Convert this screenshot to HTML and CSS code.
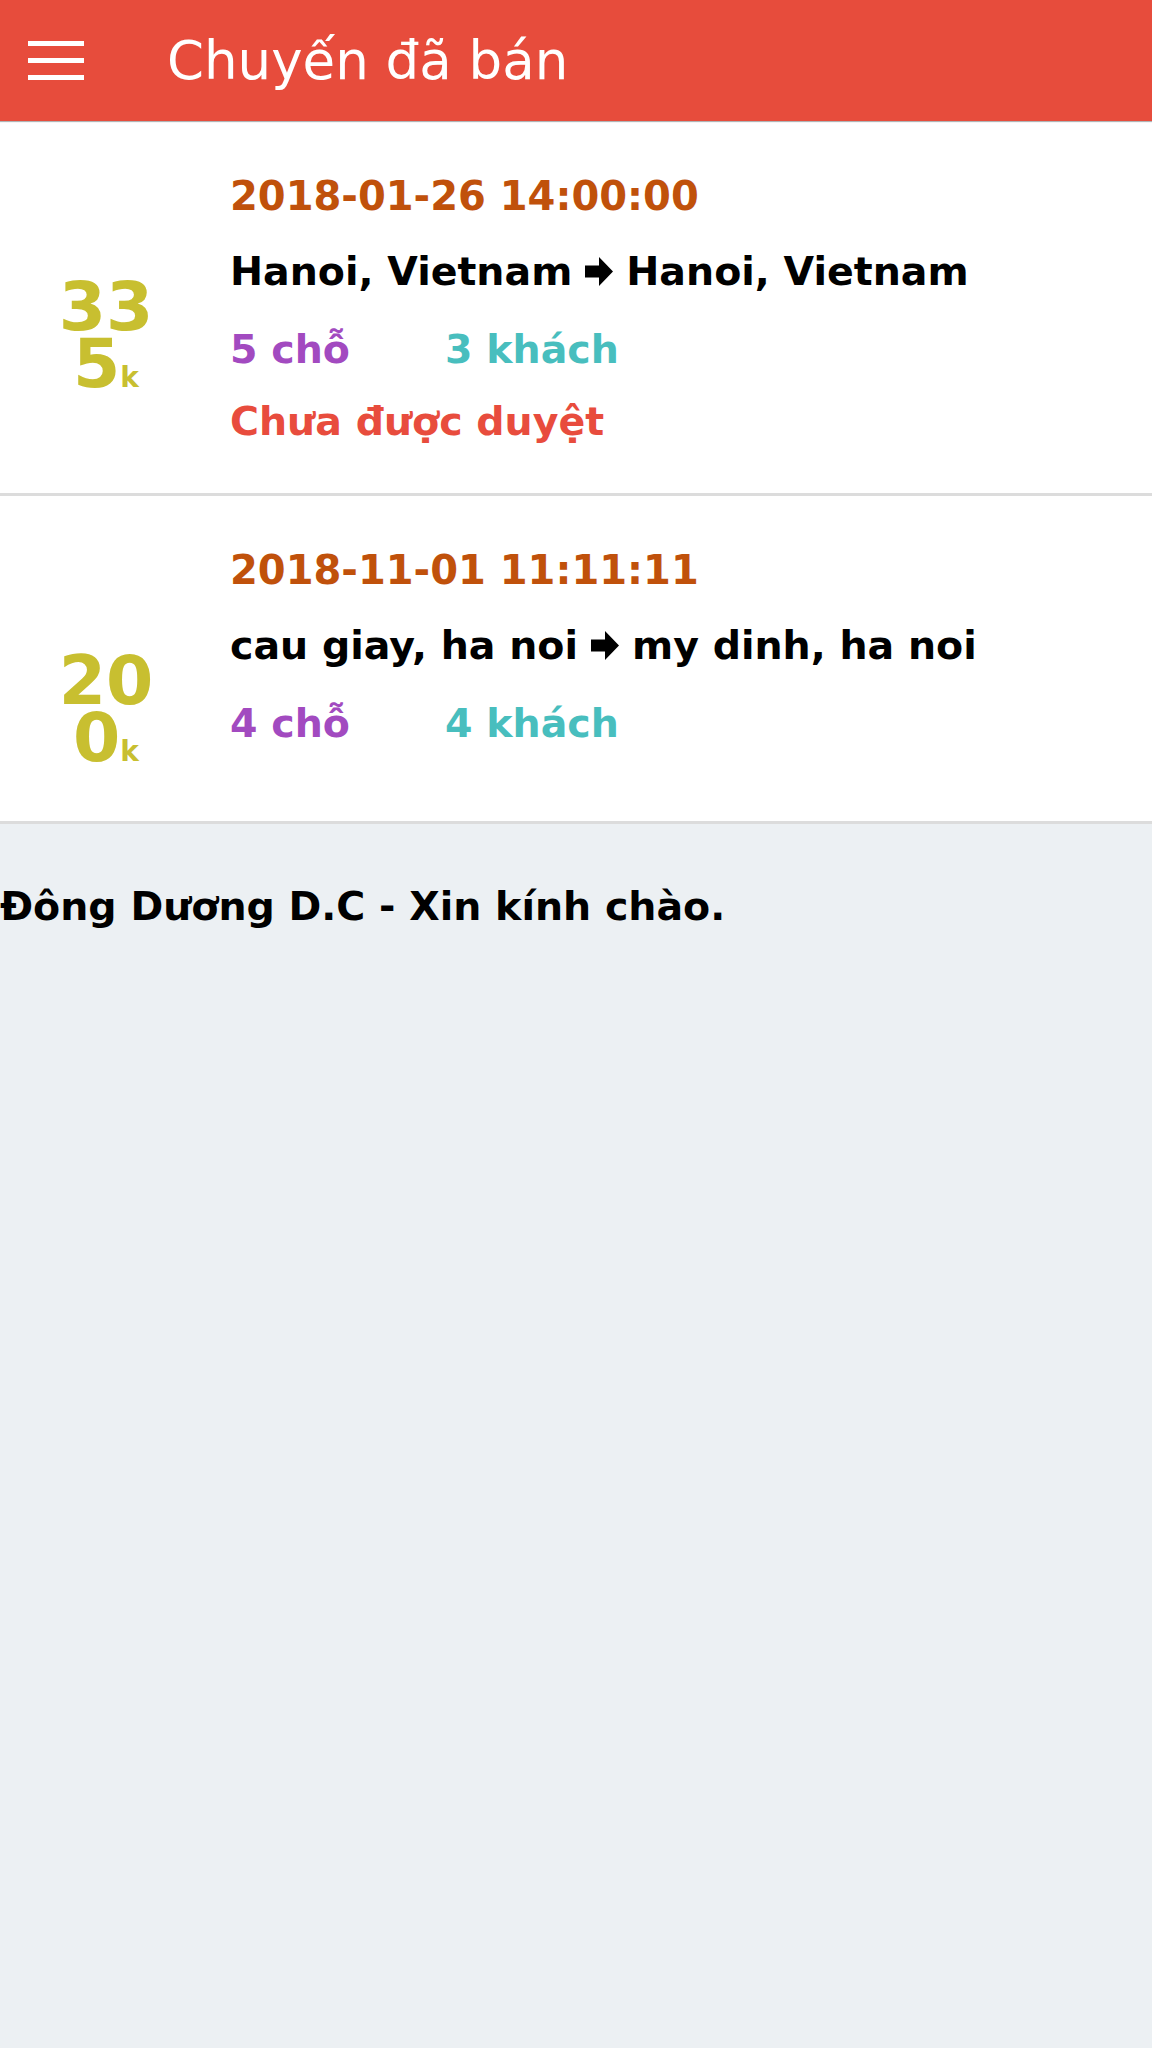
FILE: index.html
```html
<!DOCTYPE html>
<html lang="vi">
<head>
<meta charset="utf-8">
<title>Chuyến đã bán</title>
<link rel="stylesheet" href="styles.css">
</head>
<body>
<header class="topbar">
  <div class="menu-btn"><span></span><span></span><span></span></div>
  <h1 class="title">Chuyến đã bán</h1>
</header>
<main class="list">
  <div class="trip">
    <div class="price"><div class="price-inner">335<small class="unit">k</small></div></div>
    <div class="info">
      <div class="line date">2018-01-26 14:00:00</div>
      <div class="line route">Hanoi, Vietnam<svg class="arrow" viewBox="0 0 28 29" width="28" height="29"><path d="M0 8.5H14V0L28 14.5L14 29V20.5H0Z" fill="#000"/></svg>Hanoi, Vietnam</div>
      <div class="line seats"><span class="seat">5 chỗ</span><span class="guest">3 khách</span></div>
      <div class="line status">Chưa được duyệt</div>
    </div>
  </div>
  <div class="trip">
    <div class="price"><div class="price-inner">200<small class="unit">k</small></div></div>
    <div class="info">
      <div class="line date">2018-11-01 11:11:11</div>
      <div class="line route">cau giay, ha noi<svg class="arrow" viewBox="0 0 28 29" width="28" height="29"><path d="M0 8.5H14V0L28 14.5L14 29V20.5H0Z" fill="#000"/></svg>my dinh, ha noi</div>
      <div class="line seats"><span class="seat">4 chỗ</span><span class="guest">4 khách</span></div>
    </div>
  </div>
</main>
<footer class="greeting">Đông Dương D.C - Xin kính chào.</footer>
</body>
</html>
```
FILE: styles.css
```css
html, body {
  margin: 0;
  padding: 0;
}
body {
  background: #ecf0f3;
  font-family: "DejaVu Sans", sans-serif;
  color: #000;
}
.topbar {
  height: 121px;
  background: #e74c3c;
  display: flex;
  align-items: center;
  box-shadow: 0 1px 1px rgba(0,0,0,0.25);
  position: relative;
}
.menu-btn {
  margin-left: 28px;
  width: 56px;
  display: flex;
  flex-direction: column;
  gap: 12px;
}
.menu-btn span {
  display: block;
  height: 5px;
  background: #fff;
}
.title {
  margin: 0 0 0 83px;
  font-size: 53px;
  font-weight: normal;
  color: #fff;
  line-height: 1;
}
.list {
  margin-top: 1px;
}
.trip {
  display: flex;
  background: #fff;
  border-bottom: 3px solid #dcdcdc;
}
.price {
  width: 212px;
  flex: none;
  padding-top: 156px;
  display: flex;
  justify-content: center;
}
.price-inner {
  width: 100px;
  text-align: center;
  word-break: break-all;
  font-size: 68px;
  line-height: 57px;
  font-weight: bold;
  color: #c8bf30;
}
.unit {
  font-size: 28px;
}
.info {
  padding: 51px 0 49px 18px;
  font-weight: bold;
  font-size: 39.5px;
}
.line {
  line-height: 46px;
  white-space: nowrap;
}
.date {
  font-size: 40px;
  color: #c0510b;
  margin-bottom: 29px;
}
.route {
  margin-bottom: 32px;
}
.arrow {
  margin: 0 13px;
  vertical-align: -1px;
}
.seats {
  margin-bottom: 26px;
}
.seat {
  display: inline-block;
  width: 215px;
  color: #a24ac0;
}
.guest {
  color: #48bebe;
}
.status {
  color: #e84c3d;
  margin-bottom: 0;
}
.greeting {
  padding-top: 59px;
  font-weight: bold;
  font-size: 39.5px;
  line-height: 46px;
}
```
